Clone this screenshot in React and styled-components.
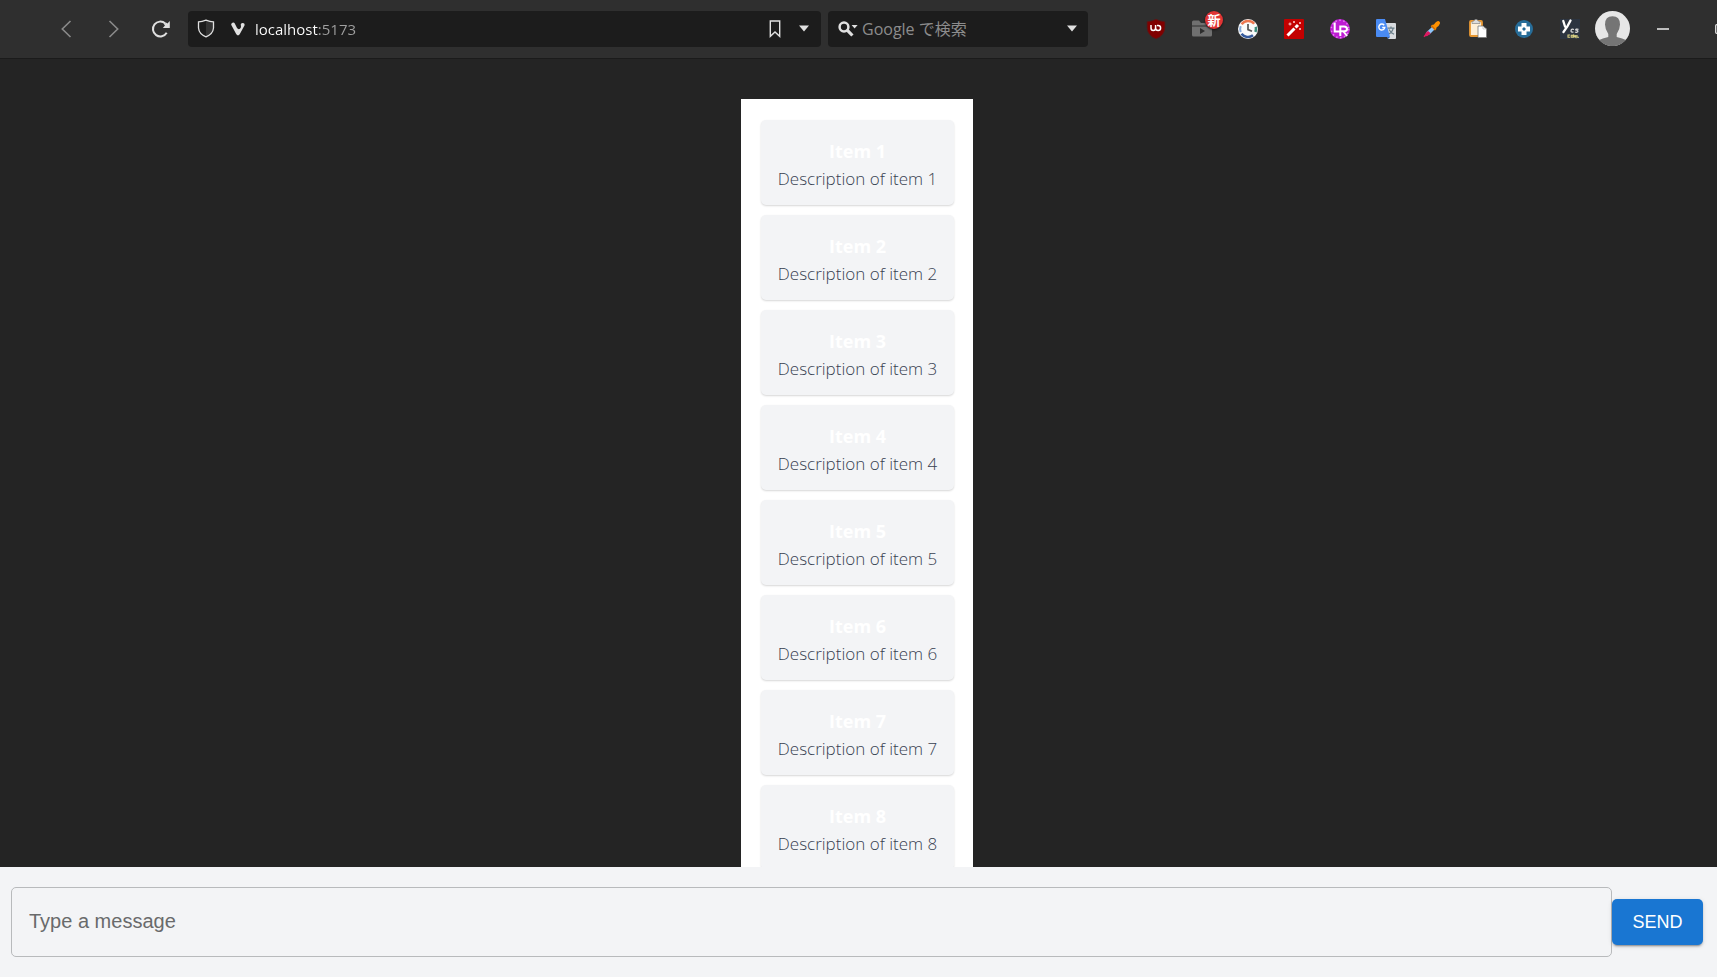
import React from "react";
import styled, { createGlobalStyle } from "styled-components";

const GlobalStyle = createGlobalStyle`
  *, *::before, *::after { box-sizing: border-box; }
  body {
    margin: 0;
    background: #242424;
    font-family: "Open Sans", "Noto Sans", "Noto Sans CJK JP", sans-serif;
  }
  button, input { font: inherit; }
`;

const Page = styled.div`
  display: flex;
  flex-direction: column;
  height: 100vh;
  overflow: hidden;
`;

const Toolbar = styled.header`
  display: flex;
  align-items: center;
  flex: none;
  height: 59px;
  padding: 0 0 1px 42px;
  background: #2f2f2f;
  border-bottom: 1px solid #1b1b1b;
  overflow: hidden;
`;

const IconButton = styled.button`
  display: flex;
  align-items: center;
  justify-content: center;
  flex: none;
  width: ${(p) => p.$width || 20}px;
  height: 36px;
  padding: 0;
  border: 0;
  background: none;
  color: ${(p) => (p.$dim ? "#8a8a8a" : "#e0e0e0")};
`;

const Navigation = styled.nav`
  display: flex;
  margin-right: 5px;
`;

const Field = styled.form`
  display: flex;
  align-items: center;
  height: 36px;
  border-radius: 4px;
  background: #1c1c1c;
`;

const AddressField = styled(Field)`
  flex: 1;
  min-width: 0;
  padding: 0 5px 0 4px;
`;

const SearchField = styled(Field)`
  flex: none;
  width: 260px;
  margin-left: 7px;
  padding: 0 5px 0 6px;
`;

const TextInput = styled.input`
  flex: 1;
  min-width: 0;
  height: 36px;
  padding: 0;
  border: 0;
  outline: 0;
  background: none;
  color: #e8e8e8;
  font-size: 16px;
  &::placeholder { color: #8c8c8c; opacity: 1; }
`;

const AddressInput = styled(TextInput)`
  color: transparent;
  font-size: 15px;
  background: linear-gradient(90deg, #ffffff 64px, #a0a0a0 64px);
  background-clip: text;
  -webkit-background-clip: text;
`;

const Extensions = styled.div`
  display: flex;
  margin-left: 45px;
`;

const ExtensionButton = styled(IconButton)`
  position: relative;
`;

const Badge = styled.span`
  position: absolute;
  top: 0;
  right: 2px;
  width: 18px;
  height: 18px;
  border-radius: 50%;
  background: #e03535;
  box-shadow: 0 1px 2px #111;
  color: #fff;
  font: 700 13px/17px "Noto Sans CJK JP", sans-serif;
  text-align: center;
`;

const WindowControls = styled.div`
  display: flex;
  flex: none;
  width: 86px;
  overflow: hidden;
`;

const Content = styled.main`
  display: flex;
  flex: 1;
  min-height: 0;
  align-items: flex-start;
  justify-content: center;
  padding: 40px 3px 0 0;
  overflow: hidden;
`;

const List = styled.ul`
  display: flex;
  flex-direction: column;
  gap: 10px;
  margin: 0;
  padding: 21px 19px 21px 20px;
  background: #fff;
  list-style: none;
`;

const Card = styled.li`
  min-width: 193px;
  padding: 18px 12px 13px;
  border-radius: 5px;
  background: #f3f4f6;
  box-shadow: 0 1px 2px rgba(0, 0, 0, 0.16);
  text-align: center;
`;

const CardTitle = styled.h2`
  margin: 0;
  color: #fff;
  font-size: 18px;
  font-weight: 700;
  line-height: 27px;
`;

const CardText = styled.p`
  margin: 0;
  color: #374151;
  font-size: 17px;
  font-weight: 300;
  line-height: 27px;
  white-space: nowrap;
`;

const Composer = styled.form`
  display: flex;
  align-items: center;
  flex: none;
  padding: 20px 14px 20px 11px;
  background: #f3f4f6;
  font-family: "Liberation Sans", Arial, sans-serif;
`;

const MessageInput = styled.input`
  flex: 1;
  min-width: 0;
  height: 70px;
  padding: 0 17px 2px;
  border: 1px solid #b8babc;
  border-radius: 5px;
  outline: 0;
  background: none;
  color: #222;
  font-size: 20px;
  &::placeholder { color: #696a6b; opacity: 1; }
`;

const SendButton = styled.button`
  min-width: 91px;
  height: 46px;
  padding: 0 20px;
  border: 0;
  border-radius: 5px;
  background: #1976d2;
  box-shadow: 0 3px 1px -2px rgba(0, 0, 0, 0.2), 0 2px 2px rgba(0, 0, 0, 0.14), 0 1px 5px rgba(0, 0, 0, 0.12);
  color: #fff;
  font-size: 18px;
  text-transform: uppercase;
`;

const Chevron = ({ forward }) => (
  <svg width="12" height="18" viewBox="0 0 12 18" fill="none" stroke="currentColor" strokeWidth="1.6">
    <path d={forward ? "M1.5 1 L9.7 9 L1.5 17" : "M10.5 1 L2.3 9 L10.5 17"} />
  </svg>
);

const Reload = () => (
  <svg width="20" height="18" viewBox="0 0 20 18">
    <path d="M15.7 12.8 A7.4 7.4 0 1 1 14.3 3.5" fill="none" stroke="currentColor" strokeWidth="2" />
    <path d="M18.8 1 V8 H11.8 L14 5.6 L13 4.5 L15 2.5 L16.4 3.4 Z" fill="currentColor" />
  </svg>
);

const Shield = () => (
  <svg width="18" height="19" viewBox="0 0 18 19">
    <path d="M9 1.5 L16 3 V9 Q16 15 9 18 Z" fill="#333" />
    <path d="M9 1.2 Q13 2.8 16.5 2.9 V9 Q16 15 9 17.8 Q2 15 1.5 9 V2.9 Q5 2.8 9 1.2 Z" fill="none" stroke="currentColor" strokeWidth="1.3" />
  </svg>
);

const Vivaldi = () => (
  <svg width="14" height="14" viewBox="0 0 14 14">
    <path d="M.3 2.9 A1.9 1.9 0 0 1 3.800 1.500 L5.900 5.800 Q7.200 8 9 6.800 Q10.300 5.600 9.900 3.500 A1.900 1.900 0 1 1 13.600 3.200 L8.700 12.300 Q7 14.600 5.300 12.300 Z" fill="currentColor" />
  </svg>
);

const Bookmark = () => (
  <svg width="12" height="18" viewBox="0 0 12 18" fill="none" stroke="currentColor" strokeWidth="1.4">
    <path d="M1.3 1 H10.7 V16.3 L6 12 L1.3 16.3 Z" />
  </svg>
);

const Caret = () => (
  <svg width="10" height="7" viewBox="0 0 10 7"><path d="M0 .5 H10 L5 6.5 Z" fill="currentColor" /></svg>
);

const SearchIcon = () => (
  <svg width="20" height="16" viewBox="0 0 20 16">
    <circle cx="6" cy="6" r="4.4" fill="none" stroke="currentColor" strokeWidth="2.5" />
    <path d="M9.2 9.2 L14.4 14.5" stroke="currentColor" strokeWidth="3.2" />
    <path d="M13.6 4 H19.6 L16.6 7.5 Z" fill="currentColor" />
  </svg>
);

const UBlock = () => (
  <svg width="20" height="20" viewBox="0 0 20 20">
    <path d="M10 .3 Q14 2.6 18.8 2.8 V9 Q18.5 16.5 10 19.8 Q1.5 16.5 1.2 9 V2.8 Q6 2.6 10 .3 Z" fill="#800000" stroke="#5f1515" strokeWidth=".7" />
    <path d="M5 6 V9 Q5 11.500 7.300 11.500 Q9.600 11.500 9.600 9 V6 M9.600 9 A2.500 2.500 0 1 0 12.100 6.500 H11" fill="none" stroke="#fff" strokeWidth="1.500" />
  </svg>
);

const VideoFolder = () => (
  <svg width="20" height="17" viewBox="0 0 20 17">
    <path d="M0 2 Q0 .5 1.5 .5 H7 L9 3 H18.5 Q20 3 20 4.5 V5.5 H0 Z M0 6.5 H20 V15 Q20 16.5 18.5 16.5 H1.5 Q0 16.5 0 15 Z" fill="#707070" />
    <path d="M8 8 L13 11 L8 14 Z" fill="#2c2c2c" />
  </svg>
);

const Clock = () => (
  <svg width="20" height="20" viewBox="0 0 20 20" fill="none">
    <circle cx="10" cy="10" r="10" fill="#fafafa" />
    <path d="M3.6 5.2 A8 8 0 0 1 16.2 4.8" stroke="#ed7750" strokeWidth="2.5" />
    <path d="M17.7 7.8 A8 8 0 0 1 17.4 13" stroke="#3c8c7c" strokeWidth="2.5" />
    <path d="M15 16.3 A8 8 0 0 1 3.5 14.7" stroke="#355a9c" strokeWidth="2.5" />
    <path d="M2.7 13 A8 8 0 0 1 2.7 7" stroke="#88a9d8" strokeWidth="2" />
    <path d="M10 5 V10.6 L14 12.2" stroke="#555" strokeWidth="1.7" />
  </svg>
);

const Wand = () => (
  <svg width="20" height="20" viewBox="0 0 20 20">
    <rect width="20" height="20" rx="1" fill="#c40000" />
    <path d="M3.5 16.5 L10.5 9.5" stroke="#fff" strokeWidth="3" />
    <path d="M11.5 8.5 L14 6" stroke="#fff" strokeWidth="3" />
    <path d="M6 3.5 V6.5 M4.5 5 H7.5 M10 2 V4 M9 3 H11 M16 3 V5 M15 4 H17 M16 9 V11 M15 10 H17" stroke="#ffd2d2" strokeWidth="1" />
  </svg>
);

const LrBadge = () => (
  <svg width="20" height="20" viewBox="0 0 20 20" fill="none">
    <circle cx="10" cy="10" r="10" fill="#bd1bd3" />
    <circle cx="10" cy="10" r="8.7" stroke="#e28bec" strokeWidth="1.4" strokeDasharray="1.5 2.5" />
    <path d="M4.7 3.5 V12.5 H9.5 M10.3 17 V7.5 H14 Q17 7.5 17 10 Q17 12.3 14 12.3 H10.5 M13.5 12.5 L17 17" stroke="#fff" strokeWidth="2" />
  </svg>
);

const Translate = () => (
  <svg width="20" height="20" viewBox="0 0 20 20" fill="none">
    <path d="M8 4 H19 Q20 4 20 5 V19 Q20 20 19 20 H12 Z" fill="#d9dcdf" />
    <path d="M11.5 9.2 H18.5 M15 7.5 V9.2 M17.2 9.2 Q16.5 13 12.5 15.2 M13 10.5 Q14.5 13.5 18 15.3" stroke="#687d88" strokeWidth="1.2" />
    <path d="M11 18 H14 L12 20 Z" fill="#2f62b7" />
    <path d="M1 0 H9 L14 18 H1 Q0 18 0 17 V1 Q0 0 1 0 Z" fill="#4a8bf3" />
    <path d="M8.2 6.2 A3 3 0 1 0 8.8 8.5 H6.2" stroke="#fff" strokeWidth="1.4" />
  </svg>
);

const Eyedropper = () => (
  <svg width="18" height="18" viewBox="0 0 18 18">
    <path d="M9 7 L11.5 9.5 L6.5 14.5 L3 12.5 Z" fill="#8cc5fa" />
    <path d="M5 11 L7.8 13.3 Q5 16.3 2.5 16.3 L1.5 17.3 L.5 16.3 L1.6 15 Q2 13 5 11 Z" fill="#df1860" />
    <path d="M8.5 5 L11 4.5 Q13 1 15.5 1 Q17.5 1.5 17 3.5 Q16 6 13.5 7.5 L13 9.8 Z" fill="#ff9100" />
    <path d="M8.4 4.9 L13.1 9.7 L11.8 10.6 L7.8 6.5 Z" fill="#e87900" />
  </svg>
);

const Clipboard = () => (
  <svg width="18" height="19" viewBox="0 0 18 19">
    <rect x="1" y="2" width="12" height="15" rx="1" fill="#fff0d8" stroke="#e99831" strokeWidth="1.8" />
    <path d="M3 4.5 V3 Q3 2 5 2 Q5.5 .2 7 .2 Q8.5 .2 9 2 Q11 2 11 3 V4.5 Z" fill="#ddd" stroke="#777" strokeWidth=".6" />
    <path d="M9 7 H14 L17.5 10 V18.5 H9 Z" fill="#fff" stroke="#777" strokeWidth=".8" />
    <path d="M14 7 V10 H17.5" fill="none" stroke="#bbb" strokeWidth=".7" />
  </svg>
);

const CrossBadge = () => (
  <svg width="18" height="18" viewBox="0 0 18 18">
    <circle cx="9" cy="9" r="9" fill="#276d99" />
    <path d="M6.5 3 H11.5 V6.5 H15 V11.5 H11.5 V15 H6.5 V11.5 H3 V6.5 H6.5 Z" fill="#fff" />
    <path d="M9 7 L11 9 L9 11 L7 9 Z" fill="#276d99" />
  </svg>
);

const Ycs = () => (
  <svg width="20" height="20" viewBox="0 0 20 20" fill="none">
    <rect width="20" height="20" fill="#2c3440" />
    <path d="M3.3 2 L5 7.5 M10.5 1.5 Q7.5 8 3.5 13" stroke="#fff" strokeWidth="2.3" strokeLinecap="round" />
    <path d="M14 10.5 Q11 9.5 11 12 Q11 13.5 13.5 13 M18.5 10.3 Q15.5 9.7 15.7 11 Q18.5 11.7 17.8 12.8 Q16.5 13.7 15 13" stroke="#ddd" strokeWidth="1.2" />
    <path d="M10 16 H8 V18.3 H10 M11.2 16.2 H13 V18.3 H11.2 Z M14 18.7 V16.2 L15.7 18.3 V16 M17 16 V18.3 H19" stroke="#d9d184" strokeWidth="1.1" />
  </svg>
);

const Avatar = () => (
  <svg width="35" height="35" viewBox="0 0 35 35">
    <circle cx="17.5" cy="17.5" r="17.5" fill="#e6e6e6" />
    <path d="M17.5 5.2 Q25 5.2 25 13.5 Q25 18 21.7 23 V26 Q28 27.5 30.8 29 A17.5 17.5 0 0 1 4.2 29 Q7 27.5 13.3 26 V23 Q10 18 10 13.5 Q10 5.2 17.5 5.2 Z" fill="#757575" />
  </svg>
);

const Minimize = () => (
  <svg width="12" height="2" viewBox="0 0 12 2"><path d="M0 1 H12" stroke="#bdbdbd" strokeWidth="2" /></svg>
);

const Maximize = () => (
  <svg width="12" height="10" viewBox="0 0 12 10"><rect x=".7" y=".7" width="10.6" height="8.6" rx="1" fill="none" stroke="currentColor" strokeWidth="1.3" /></svg>
);

const extensions = [
  { name: "uBlock", Icon: UBlock },
  { name: "Video folder", Icon: VideoFolder, badge: "新" },
  { name: "History", Icon: Clock },
  { name: "Magic wand", Icon: Wand },
  { name: "LR", Icon: LrBadge },
  { name: "Translate", Icon: Translate },
  { name: "Color picker", Icon: Eyedropper },
  { name: "Clipboard", Icon: Clipboard },
  { name: "Controls", Icon: CrossBadge },
  { name: "YCS", Icon: Ycs },
];

const items = Array.from({ length: 8 }, (_, i) => ({
  title: `Item ${i + 1}`,
  description: `Description of item ${i + 1}`,
}));

const stop = (e) => e.preventDefault();

export default function App() {
  return (
    <Page>
      <GlobalStyle />
      <Toolbar>
        <Navigation>
          <IconButton type="button" aria-label="Back" $width={48} $dim><Chevron /></IconButton>
          <IconButton type="button" aria-label="Forward" $width={48} $dim><Chevron forward /></IconButton>
          <IconButton type="button" aria-label="Reload" $width={45}><Reload /></IconButton>
        </Navigation>
        <AddressField onSubmit={stop}>
          <IconButton type="button" aria-label="Site protection" $width={28}><Shield /></IconButton>
          <IconButton type="button" aria-label="Site information" $width={35}><Vivaldi /></IconButton>
          <AddressInput type="text" aria-label="Address" defaultValue="localhost:5173" />
          <IconButton type="button" aria-label="Bookmark page" $width={34}><Bookmark /></IconButton>
          <IconButton type="button" aria-label="Address history" $width={24}><Caret /></IconButton>
        </AddressField>
        <SearchField onSubmit={stop}>
          <IconButton type="button" aria-label="Choose search engine" $width={28}><SearchIcon /></IconButton>
          <TextInput type="search" aria-label="Search" placeholder="Google で検索" />
          <IconButton type="button" aria-label="Search history" $width={22}><Caret /></IconButton>
        </SearchField>
        <Extensions>
          {extensions.map(({ name, Icon, badge }) => (
            <ExtensionButton key={name} type="button" aria-label={name} $width={46}>
              <Icon />
              {badge && <Badge>{badge}</Badge>}
            </ExtensionButton>
          ))}
        </Extensions>
        <IconButton type="button" aria-label="Profile" $width={38}><Avatar /></IconButton>
        <WindowControls>
          <IconButton type="button" aria-label="Minimize" $width={64}><Minimize /></IconButton>
          <IconButton type="button" aria-label="Maximize" $width={52}><Maximize /></IconButton>
        </WindowControls>
      </Toolbar>
      <Content>
        <List>
          {items.map((item) => (
            <Card key={item.title}>
              <CardTitle>{item.title}</CardTitle>
              <CardText>{item.description}</CardText>
            </Card>
          ))}
        </List>
      </Content>
      <Composer onSubmit={stop}>
        <MessageInput type="text" aria-label="Message" placeholder="Type a message" />
        <SendButton type="submit">Send</SendButton>
      </Composer>
    </Page>
  );
}
